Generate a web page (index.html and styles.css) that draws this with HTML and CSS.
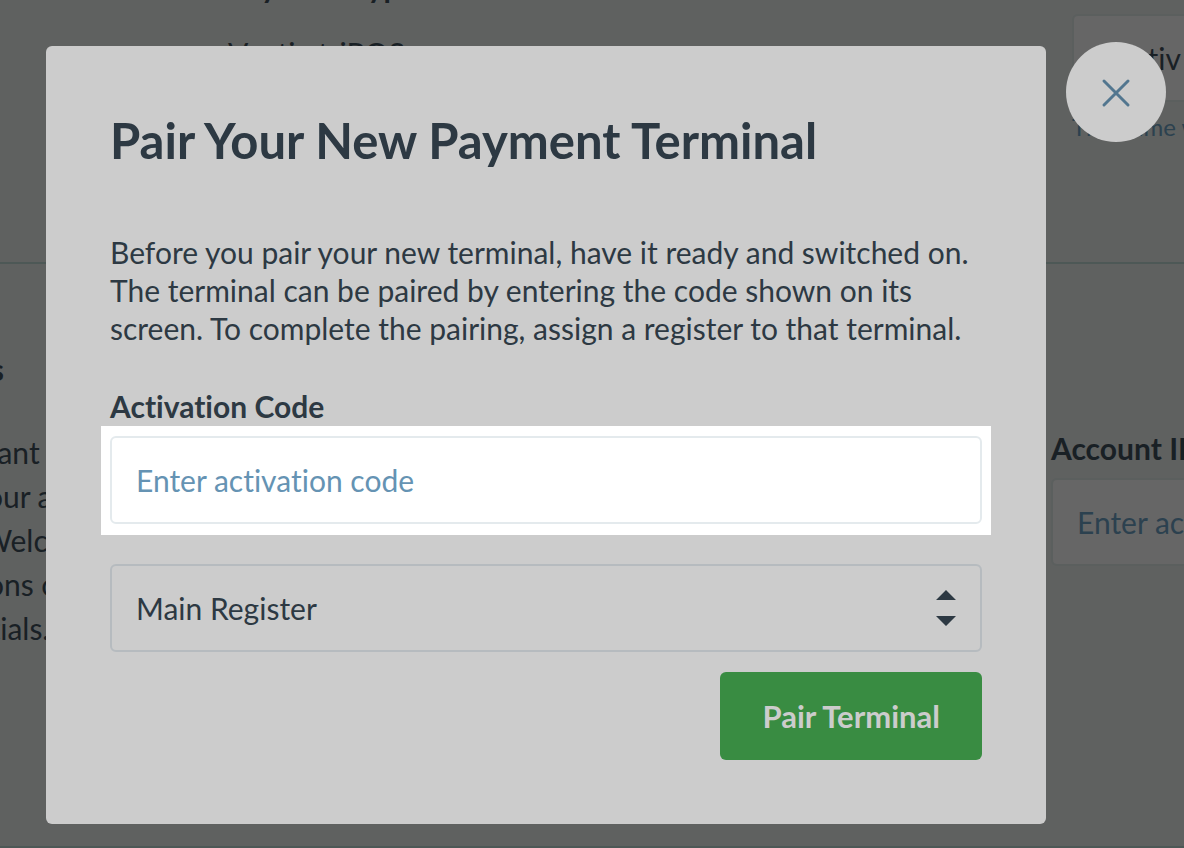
FILE: index.html
```html
<!DOCTYPE html>
<html lang="en">
<head>
<meta charset="utf-8">
<meta name="viewport" content="width=device-width, initial-scale=1">
<title>Pair Your New Payment Terminal</title>
<link rel="stylesheet" href="styles.css">
</head>
<body>
<div class="page">
  <section class="section payment">
    <div class="payment-type">
      <h2 class="heading">Payment Type</h2>
      <p class="text">Vantiv triPOS</p>
    </div>
    <div class="payment-name">
      <input class="field dim" type="text" value="Vantiv" aria-label="Name">
      <p class="hint">The name will</p>
    </div>
  </section>
  <section class="section credentials">
    <div class="about">
      <h2 class="heading about-heading">Credentials</h2>
      <p class="text about-text">merchant with<br>your asset<br>Welcome<br>instructions once<br>credentials. See</p>
    </div>
    <div class="account">
      <label class="label dim-label" for="account">Account ID</label>
      <input class="field dim" id="account" type="text" placeholder="Enter account ID">
    </div>
  </section>
</div>

<div class="overlay">
  <div class="modal" role="dialog" aria-modal="true" aria-labelledby="title">
    <h1 class="title" id="title">Pair Your New Payment Terminal</h1>
    <p class="intro">Before you pair your new terminal, have it ready and switched on. The terminal can be paired by entering the code shown on its screen. To complete the pairing, assign a register to that terminal.</p>
    <form class="form">
      <label class="label code-label" for="code">Activation Code</label>
      <div class="highlight">
        <input class="field" id="code" type="text" placeholder="Enter activation code">
      </div>
      <div class="select">
        <select class="field" aria-label="Register"><option>Main Register</option></select>
        <svg class="arrows" width="20" height="36" viewBox="0 0 20 36" aria-hidden="true"><path d="M0 10 10 0 20 10ZM0 26 10 36 20 26Z"/></svg>
      </div>
      <button class="submit" type="button">Pair Terminal</button>
    </form>
  </div>
  <button class="close" type="button" aria-label="Close">
    <svg width="28" height="28" viewBox="0 0 28 28" aria-hidden="true"><path d="M2 3 26 27M26 3 2 27"/></svg>
  </button>
</div>
</body>
</html>
```
FILE: styles.css
```css
* { box-sizing: border-box; }

body {
  margin: 0;
  background: #5f6160;
  color: #2d3943;
  font-family: Lato, "Open Sans", sans-serif;
  font-size: 30px;
  line-height: 38px;
  font-variant-ligatures: none;
  overflow: hidden;
}

h1, h2, p { margin: 0; }

.page {
  color: #192025;
  overflow: hidden;
}

.section {
  display: flex;
  justify-content: space-between;
  border-bottom: 2px solid #4d5856;
}

.payment {
  height: 264px;
  padding-left: 228px;
}

.heading {
  font-size: 30px;
  line-height: 44px;
  font-weight: 700;
}

.text { line-height: 44px; }

.payment-type { margin-top: -36px; }
.payment-type .text { margin-top: 23px; }

.payment-name {
  width: 112px;
  padding-top: 14px;
}

.payment-name .field,
.account .field { width: 480px; }

.hint {
  margin-top: 7px;
  font-size: 24px;
  line-height: 36px;
  color: #2c414f;
  white-space: nowrap;
}

.credentials {
  height: 584px;
}

.about {
  display: flex;
  flex-direction: column;
  align-items: flex-end;
  width: 105px;
  padding-top: 83px;
  white-space: nowrap;
  text-align: right;
}

.about-heading { padding-right: 101px; }
.about-text { margin-top: 39px; }

.account {
  width: 133px;
  padding-top: 165px;
  white-space: nowrap;
}

.label {
  display: block;
  font-weight: 700;
}

.dim-label { margin-bottom: 11px; }
.code-label { margin-bottom: 1px; }

.field {
  display: block;
  width: 100%;
  height: 88px;
  margin: 0;
  padding: 0 24px;
  border: 2px solid #e4eaed;
  border-radius: 6px;
  background: #fff;
  color: #2d3943;
  font: inherit;
  font-variant-ligatures: none;
  appearance: none;
}

.field::placeholder { color: #6593b3; opacity: 1; }

.field.dim {
  border-color: #5b5f5e;
  background: #666;
  color: #192025;
}

.field.dim::placeholder { color: #2c414f; }

.overlay {
  position: absolute;
  inset: 0;
  display: flex;
  align-items: flex-start;
  gap: 20px;
  padding: 42px 18px 24px 46px;
}

.modal {
  flex: 1;
  margin-top: 4px;
  padding: 64px;
  border-radius: 6px;
  background: #ccc;
}

.title {
  font-size: 49px;
  line-height: 60px;
  font-weight: 700;
}

.intro { margin: 63px 0 40px; }

.highlight {
  margin: 0 -9px 29px;
  padding: 10px 9px 11px;
  background: #fff;
}

.select {
  position: relative;
  margin-bottom: 20px;
}

.select .field {
  border-color: #b6bbbf;
  background: #ccc;
}

.arrows {
  position: absolute;
  top: 26px;
  right: 26px;
  fill: #2d3943;
  pointer-events: none;
}

.submit {
  display: block;
  height: 88px;
  margin-left: auto;
  padding: 0 42px;
  border: 0;
  border-radius: 6px;
  background: #398c42;
  color: #ccc;
  font: inherit;
  font-size: 31px;
  font-weight: 700;
}

.close {
  display: flex;
  align-items: center;
  justify-content: center;
  width: 100px;
  height: 100px;
  padding: 0;
  border: 0;
  border-radius: 50%;
  background: #ccc;
}

.close svg { overflow: visible; }

.close path {
  fill: none;
  stroke: #52768f;
  stroke-width: 3;
  stroke-linecap: round;
}
```
